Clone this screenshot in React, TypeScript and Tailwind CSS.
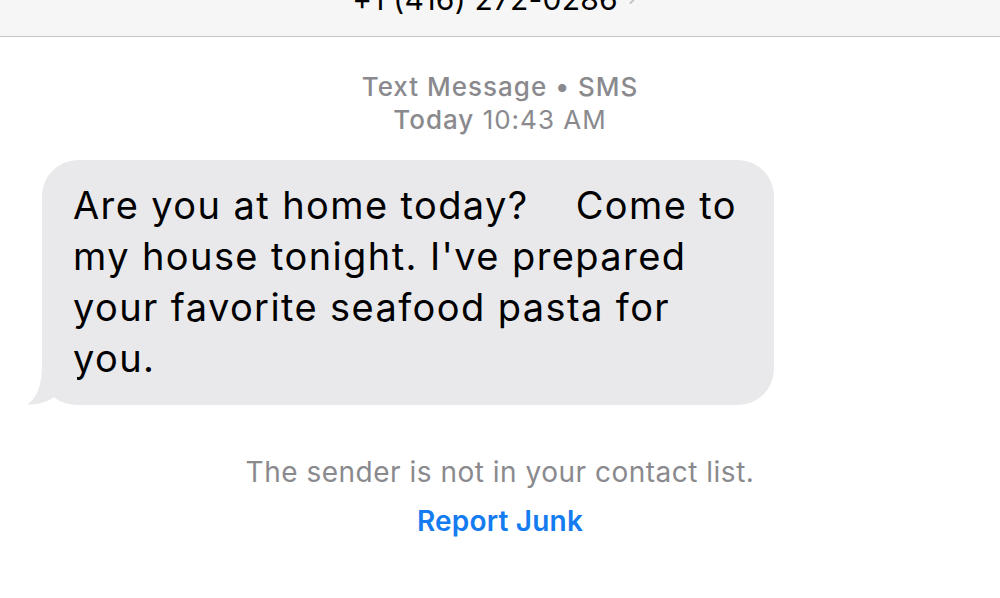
import { ChevronRight } from "lucide-react";

const font = { fontFamily: "Inter, 'Liberation Sans', sans-serif" };

function Header() {
	return (
		<header className="h-[37px] shrink-0 overflow-hidden bg-[#f6f6f6] border-b border-[#c6c6c8] flex justify-center">
			<div className="-mt-[16px] flex items-center h-[30px] leading-none text-[30px] tracking-[0.2px] text-black">
				<span>+1 (416) 272-0286</span>
				<ChevronRight className="ml-0.5 -mt-[6px] text-[#c4c4c6]" size={28} strokeWidth={1.6} />
			</div>
		</header>
	);
}

function Bubble() {
	return (
		<div className="relative ml-[42px] mt-[24px] w-[732px] rounded-[36px] bg-[#e9e9eb] pl-[31px] pr-[20px] pt-[20px] pb-[21px] text-[38px] leading-[51px] tracking-[1.4px] text-black">
			<span className="block">
				Are you at home today?<span className="inline-block w-[47px]" />Come to
			</span>
			<span className="block">my house tonight. I've prepared</span>
			<span className="block">your favorite seafood pasta for</span>
			<span className="block">you.</span>
			<svg
				className="absolute -left-[15px] bottom-0"
				width="50"
				height="40"
				viewBox="0 0 50 40"
			>
				<path
					d="M15 0 C15 20 10 33 0 39.5 C10 40 20 37 27 32 C32 37 40 39 50 40 L50 0 Z"
					fill="#e9e9eb"
				/>
			</svg>
		</div>
	);
}

export default function App() {
	return (
		<div className="w-full h-[598px] overflow-hidden bg-white flex flex-col" style={font}>
			<Header />
			<div className="pt-[33px] flex flex-col items-center text-[26px] leading-[33px] tracking-[1px] text-[#8a8a8e]">
				<span className="font-medium">Text Message • SMS</span>
				<span>
					<span className="font-medium">Today</span> 10:43 AM
				</span>
			</div>
			<Bubble />
			<div className="mt-[50px] flex flex-col items-center">
				<span className="text-[28px] leading-[34px] tracking-[0.5px] text-[#8a8a8e]">
					The sender is not in your contact list.
				</span>
				<button className="mt-[15px] text-[28px] leading-[34px] tracking-[0.2px] font-semibold text-[#147cf0]">
					Report Junk
				</button>
			</div>
		</div>
	);
}
